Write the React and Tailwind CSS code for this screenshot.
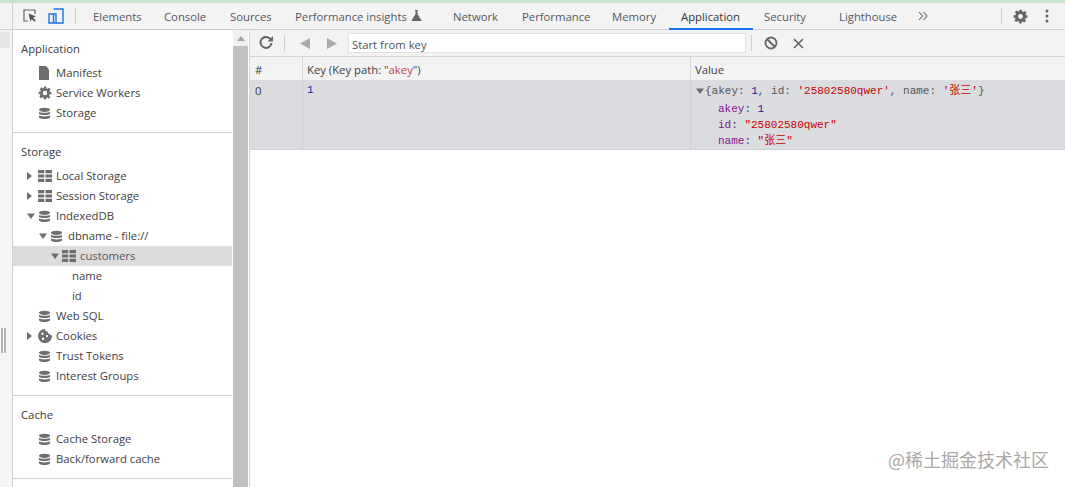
import React from "react";

const Db = ({ c = "" }) => (
  <svg width="13" height="13" viewBox="0 0 14 14" className={c}>
    <ellipse cx="7" cy="3" rx="6" ry="2.3" fill="#6e6e6e" />
    <path d="M1 5.200c1 1.500 11 1.500 12 0v2c-1 2-11 2-12 0zM1 9c1 1.500 11 1.500 12 0v2c-.5 2.600-11.500 2.600-12 0z" fill="#6e6e6e" />
  </svg>
);
const Grid = () => (
  <svg width="14" height="12" viewBox="0 0 14 12">
    <path d="M0 0h6.200v3.200H0zM7.500 0H14v3.200H7.500zM0 4.400h6.200v3.200H0zM7.500 4.400H14v3.200H7.500zM0 8.800h6.200V12H0zM7.500 8.800H14V12H7.500z" fill="#6e6e6e" />
  </svg>
);
const Doc = () => (
  <svg width="12" height="14" viewBox="0 0 12 14"><path d="M1 0h7l3 3.500V14H1z" fill="#6e6e6e" /></svg>
);
const Gear = ({ size = 14, fill = "#6e6e6e" }) => (
  <svg width={size} height={size} viewBox="0 0 24 24">
    <path fill={fill} fillRule="evenodd" d="M10 1h4l.6 3.100 1.700.7 2.600-1.800 2.800 2.800-1.800 2.600.7 1.700L23 10v4l-3.100.6-.7 1.700 1.800 2.600-2.800 2.800-2.600-1.800-1.700.7L14 23h-4l-.6-3.100-1.700-.7-2.600 1.800-2.800-2.800 1.800-2.600-.7-1.700L1 14v-4l3.100-.6.7-1.700L3 5.100 5.800 2.300l2.600 1.800 1.700-.7zM12 8.200a3.800 3.800 0 1 0 0 7.600 3.800 3.800 0 0 0 0-7.600z" />
  </svg>
);
const Cookie = () => (
  <svg width="14" height="14" viewBox="0 0 14 14">
    <path fill="#6e6e6e" fillRule="evenodd" d="M7 0a2.500 2.500 0 0 0 2.500 2.500A2.500 2.500 0 0 0 12 5a2 2 0 0 0 2 1.500A7 7 0 1 1 7 0zM4.500 3.500a1.200 1.200 0 1 0 0 2.400 1.200 1.200 0 0 0 0-2.400zM9 6a1.100 1.100 0 1 0 0 2.200A1.100 1.100 0 0 0 9 6zM5 8.500a1.200 1.200 0 1 0 0 2.400 1.200 1.200 0 0 0 0-2.400z" />
  </svg>
);
const Arrow = ({ open }) => (
  <svg width="8" height="8" viewBox="0 0 8 8">
    {open ? <path d="M0 1.500h8L4 7z" fill="#6e6e6e" /> : <path d="M0 0v8L5 4z" fill="#6e6e6e" />}
  </svg>
);

const Row = ({ indent, arrow, icon, label, active }) => (
  <div className={`flex items-center h-5 ${active ? "bg-[#dcdcdc]" : ""}`} style={{ paddingLeft: indent }}>
    <span className="w-[11px] shrink-0 flex items-center">{arrow !== undefined && <Arrow open={arrow} />}</span>
    {icon && <span className="w-[18px] shrink-0 flex items-center">{icon}</span>}
    <span className={`whitespace-nowrap ${active ? "text-[#5a5a5a]" : "text-[#3f4042]"}`}>{label}</span>
  </div>
);

const Section = ({ title, children }) => (
  <div className="pt-[9px] border-b border-[#cfcfcf]">
    <div className="h-[20px] pl-2 flex items-center text-[#3a3a3a]">{title}</div>
    <div className="pt-[4px] pb-[9px]">{children}</div>
  </div>
);

const tabs = [
  ["Elements", 71],
  ["Console", 66],
  ["Sources", 65],
  ["Performance insights", 158],
  ["Network", 69],
  ["Performance", 90],
  ["Memory", 57],
  ["Application", 84],
  ["Security", 75],
  ["Lighthouse", 75],
];

export default function App() {
  return (
    <div className="w-[1065px] h-[487px] overflow-hidden bg-white flex flex-col text-[11.3px] leading-none relative" style={{ fontFamily: '"Open Sans","Noto Sans CJK SC",sans-serif' }}>
      <div className="h-[3px] bg-[#c5e3c8] shrink-0" />
      {/* Top toolbar */}
      <div className="h-[27px] shrink-0 bg-[#f3f3f4] border-b border-[#cfd0d2] flex items-center text-[#55585c]">
        <div className="w-[13px] h-full border-r border-[#d0d0d0] shrink-0" />
        <span className="ml-[10px] w-[14px] flex">
          <svg width="14" height="14" viewBox="0 0 14 14"><path d="M5 12H1V1h11v4" fill="none" stroke="#666" strokeWidth="1.200" /><path d="M5.500 4.500l7.500 3-3 1.200 2.800 2.900-1.300 1.200-2.800-2.800L7.500 13z" fill="#555" /></svg>
        </span>
        <span className="ml-[11px] w-[16px] flex">
          <svg width="16" height="16" viewBox="0 0 16 16"><path d="M5.500 1H15v14H5.500V6M1 6h7v9H1z" fill="none" stroke="#1a73e8" strokeWidth="1.400" /></svg>
        </span>
        <span className="ml-[11px] w-px h-4 bg-[#ccc]" />
        <div className="flex items-center ml-[17px] h-full">
          {tabs.map(([t, w]) => (
            <span
              key={t}
              className={`h-full flex items-center whitespace-nowrap pt-[2px] ${t === "Application" ? "text-[#333] border-b-2 border-[#1a73e8] pl-[12px] mr-[11px] -mb-px" : ""}`}
              style={{ width: w }}
            >
              {t}
              {t === "Performance insights" && (
                <svg className="ml-1 -mt-[3px]" width="11" height="11" viewBox="0 0 11 11"><path d="M4 0h3v1h-.500v3L10.500 10.500c.2.300 0 .500-.300.500H.800c-.300 0-.500-.200-.300-.500L4.500 4V1H4z" fill="#666" /></svg>
              )}
            </span>
          ))}
        </div>
        <svg className="ml-[4px]" width="10" height="10" viewBox="0 0 10 10"><path d="M1 1l3.500 4L1 9M5.500 1L9 5 5.500 9" fill="none" stroke="#666" strokeWidth="1.100" /></svg>
        <span className="ml-[73px] w-px h-4 bg-[#ccc]" />
        <span className="ml-[11px] flex"><Gear size={15} fill="#666" /></span>
        <svg className="ml-[17px]" width="4" height="14" viewBox="0 0 4 14"><circle cx="2" cy="2" r="1.500" fill="#666" /><circle cx="2" cy="7" r="1.500" fill="#666" /><circle cx="2" cy="12" r="1.500" fill="#666" /></svg>
      </div>

      <div className="flex flex-1 min-h-0">
        {/* Left strip */}
        <div className="w-[13px] shrink-0 bg-[#f5f5f5] border-r border-[#d0d0d0] flex flex-col">
          <div className="mt-[2px] h-[16px] w-[10px] bg-[#e6e6e8]" />
          <div className="mt-[280px] ml-[1px] h-[25px] w-[5px] border-x-2 border-[#b4b4b4]" />
        </div>
        {/* Sidebar */}
        <div className="w-[219px] shrink-0 bg-white">
          <Section title="Application">
            <Row indent={14} icon={<Doc />} label="Manifest" />
            <Row indent={14} icon={<Gear />} label="Service Workers" />
            <Row indent={14} icon={<Db />} label="Storage" />
          </Section>
          <Section title="Storage">
            <Row indent={14} arrow={false} icon={<Grid />} label="Local Storage" />
            <Row indent={14} arrow={false} icon={<Grid />} label="Session Storage" />
            <Row indent={14} arrow={true} icon={<Db />} label="IndexedDB" />
            <Row indent={26} arrow={true} icon={<Db />} label="dbname - file://" />
            <Row indent={38} arrow={true} icon={<Grid />} label="customers" active />
            <Row indent={48} label="name" />
            <Row indent={48} label="id" />
            <Row indent={14} icon={<Db />} label="Web SQL" />
            <Row indent={14} arrow={false} icon={<Cookie />} label="Cookies" />
            <Row indent={14} icon={<Db />} label="Trust Tokens" />
            <Row indent={14} icon={<Db />} label="Interest Groups" />
          </Section>
          <Section title="Cache">
            <Row indent={14} icon={<Db />} label="Cache Storage" />
            <Row indent={14} icon={<Db />} label="Back/forward cache" />
          </Section>
        </div>
        {/* Scrollbar */}
        <div className="w-[18px] shrink-0 bg-white flex flex-col items-center border-r border-[#d4d4d4]">
          <div className="w-[15px] h-[16px] bg-[#f1f1f1] flex items-center justify-center">
            <svg width="8" height="5" viewBox="0 0 8 5"><path d="M0 5l4-5 4 5z" fill="#a3a3a3" /></svg>
          </div>
          <div className="w-[15px] flex-1 bg-[#c1c1c1]" />
        </div>
        {/* Main */}
        <div className="flex-1 min-w-0 flex flex-col">
          <div className="h-[27px] shrink-0 bg-[#f3f3f4] border-b border-[#d2d3d5] flex items-center">
            <svg className="ml-[9px]" width="14" height="14" viewBox="0 0 14 14"><path d="M11.700 3.500A5.500 5.500 0 1 0 12.500 7" fill="none" stroke="#666" strokeWidth="2" /><path d="M8.500 5.500H14V0z" fill="#666" /></svg>
            <span className="ml-[11px] w-px h-4 bg-[#ccc]" />
            <svg className="ml-[14px]" width="11" height="11" viewBox="0 0 11 11"><path d="M11 0v11L1 5.500z" fill="#a9a9a9" /></svg>
            <svg className="ml-[17px]" width="11" height="11" viewBox="0 0 11 11"><path d="M0 0v11l10-5.500z" fill="#a9a9a9" /></svg>
            <div className="ml-[10px] w-[398px] h-[20px] bg-white border border-[#e2e2e2] flex items-center pl-[3px] pt-[3px] text-[#505458] whitespace-nowrap">Start from key</div>
            <span className="ml-[5px] w-px h-4 bg-[#ccc]" />
            <svg className="ml-[12px]" width="14" height="14" viewBox="0 0 14 14"><circle cx="7" cy="7" r="5.500" fill="none" stroke="#666" strokeWidth="1.800" /><path d="M3 3l8 8" stroke="#666" strokeWidth="1.800" /></svg>
            <svg className="ml-[15px]" width="11" height="11" viewBox="0 0 11 11"><path d="M1 1l9 9M10 1l-9 9" stroke="#666" strokeWidth="1.600" /></svg>
          </div>
          {/* Table header */}
          <div className="h-[23px] shrink-0 bg-[#f3f3f4] flex items-center text-[#3f4042]">
            <div className="w-[53px] h-full pl-[5px] pt-[3px] flex items-center border-r border-[#d8d8d8]">#</div>
            <div className="w-[388px] h-full pl-[4px] pt-[3px] flex items-center border-r border-[#d8d8d8] whitespace-pre">Key (Key path: "<span className="text-[#c33f3f]">akey</span>")</div>
            <div className="flex-1 h-full pl-[4px] pt-[3px] flex items-center">Value</div>
          </div>
          {/* Data row */}
          <div className="h-[70px] shrink-0 bg-[#dadce0] flex border-b border-[#d0d1d3]">
            <div className="w-[53px] h-full pl-[5px] pt-[5px] border-r border-[#cfd0d3] text-[#3f4042]">0</div>
            <div className="w-[388px] h-full pl-[4px] pt-[5px] border-r border-[#cfd0d3] text-[#1a1aa6] text-[11px]" style={{ fontFamily: '"Liberation Mono",monospace' }}>1</div>
            <div className="flex-1 h-full pl-[5px] pt-[6px] text-[11px] text-[#555] whitespace-nowrap" style={{ fontFamily: '"Liberation Mono","Noto Sans CJK SC",monospace' }}>
              <div className="h-[15px] flex items-start">
                <span className="w-[9px] pt-[1px] flex"><Arrow open /></span>
                <span>{"{akey: "}<span className="text-[#1a1aa6]">1</span>{", id: "}<span className="text-[#c80000]">'25802580qwer'</span>{", name: "}<span className="text-[#c80000]">'张三'</span>{"}"}</span>
              </div>
              <div className="pl-[22px] h-[16px] flex items-center"><span className="text-[#881391]">akey</span><span className="text-[#303942]">:&nbsp;</span><span className="text-[#1a1aa6]">1</span></div>
              <div className="pl-[22px] h-[16px] flex items-center"><span className="text-[#881391]">id</span><span className="text-[#303942]">:&nbsp;</span><span className="text-[#c80000]">"25802580qwer"</span></div>
              <div className="pl-[22px] h-[16px] flex items-center"><span className="text-[#881391]">name</span><span className="text-[#303942]">:&nbsp;</span><span className="text-[#c80000]">"张三"</span></div>
            </div>
          </div>
          <div className="flex-1 bg-white" />
        </div>
      </div>
      <div className="absolute right-[16px] top-[450px] text-[18px] text-[#a8a8a8] whitespace-nowrap" style={{ fontFamily: '"Noto Sans CJK SC",sans-serif' }}>@稀土掘金技术社区</div>
    </div>
  );
}
